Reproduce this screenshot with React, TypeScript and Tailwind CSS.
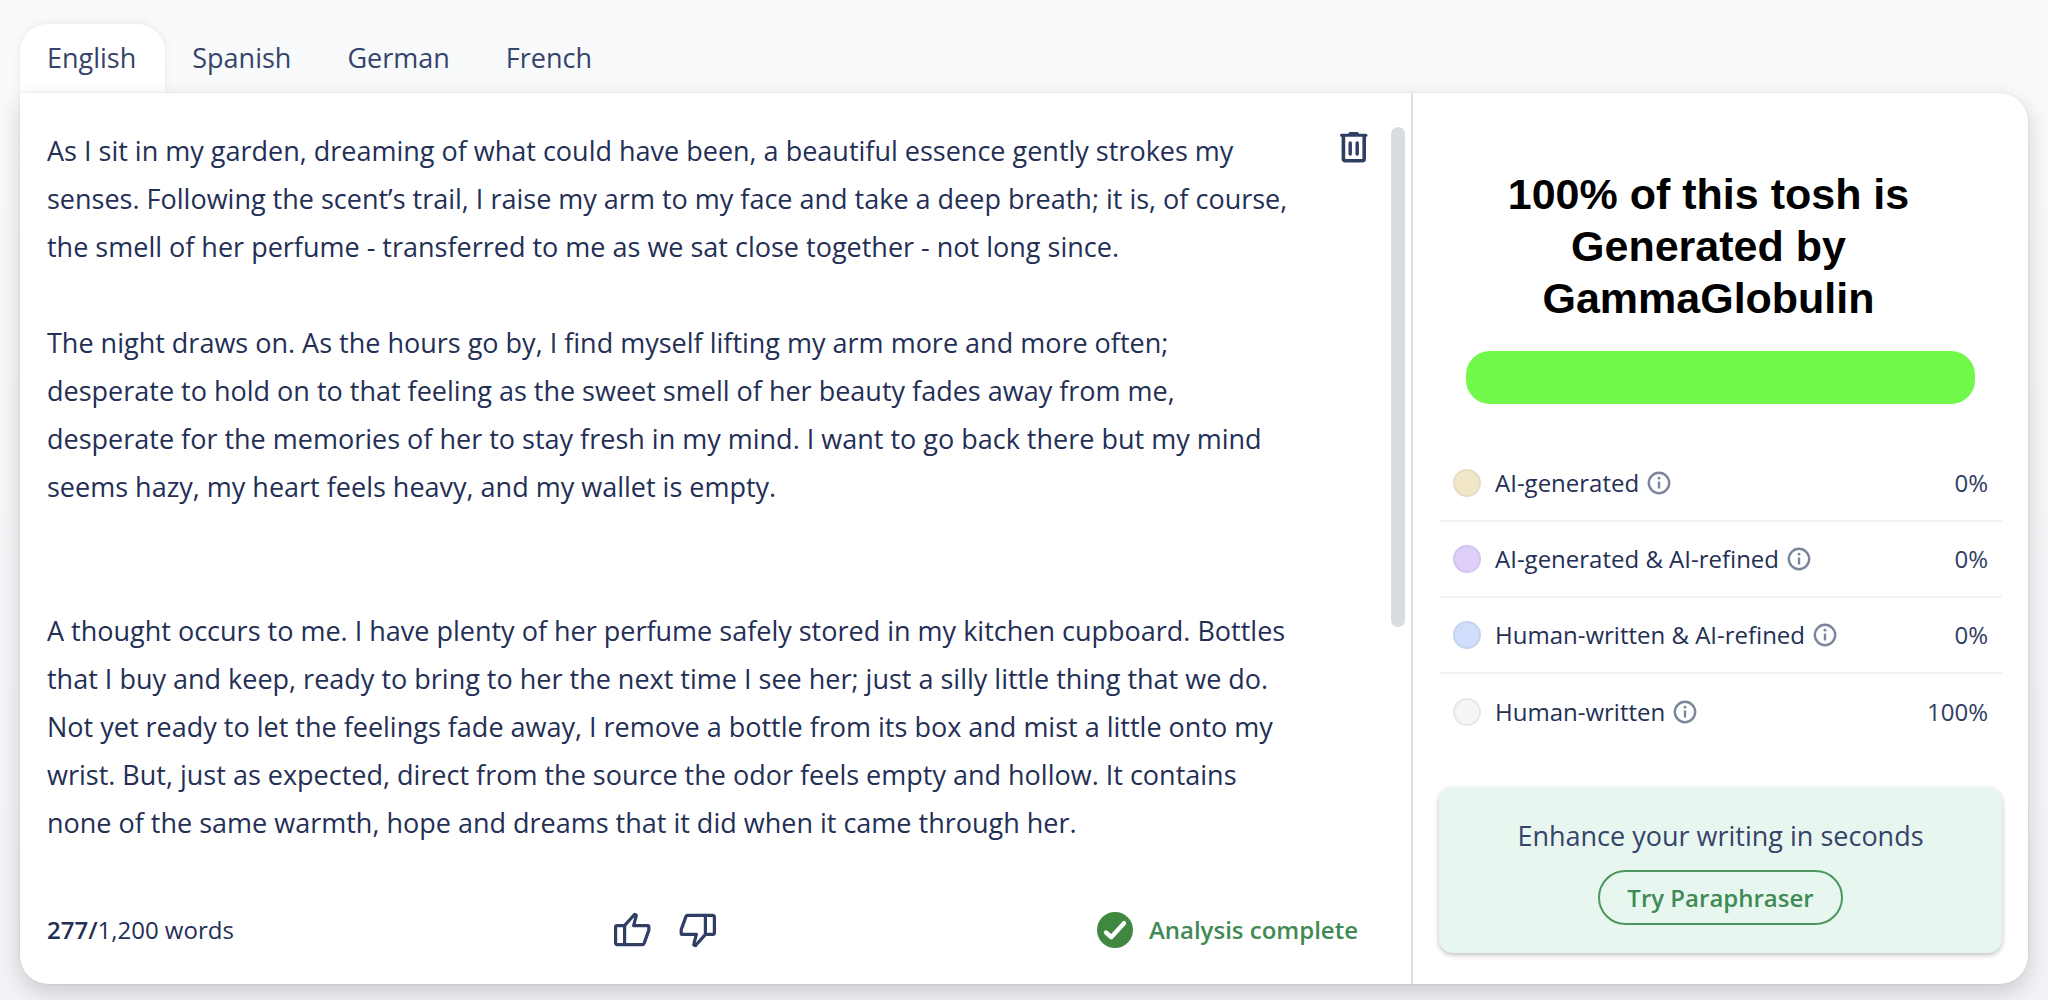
import { useState } from "react";

const languages = ["English", "Spanish", "German", "French"];

const essay = `As I sit in my garden, dreaming of what could have been, a beautiful essence gently strokes my senses. Following the scent’s trail, I raise my arm to my face and take a deep breath; it is, of course, the smell of her perfume - transferred to me as we sat close together - not long since.

The night draws on. As the hours go by, I find myself lifting my arm more and more often; desperate to hold on to that feeling as the sweet smell of her beauty fades away from me, desperate for the memories of her to stay fresh in my mind. I want to go back there but my mind seems hazy, my heart feels heavy, and my wallet is empty.


A thought occurs to me. I have plenty of her perfume safely stored in my kitchen cupboard. Bottles that I buy and keep, ready to bring to her the next time I see her; just a silly little thing that we do. Not yet ready to let the feelings fade away, I remove a bottle from its box and mist a little onto my wrist. But, just as expected, direct from the source the odor feels empty and hollow. It contains none of the same warmth, hope and dreams that it did when it came through her.`;

const results = [
  { label: "AI-generated", value: "0%", dot: "bg-[#f2e6c9] border-[#e6dcc3]" },
  { label: "AI-generated & AI-refined", value: "0%", dot: "bg-[#decffb] border-[#d3c5ef]" },
  { label: "Human-written & AI-refined", value: "0%", dot: "bg-[#cfdefb] border-[#c5d3ef]" },
  { label: "Human-written", value: "100%", dot: "bg-[#f4f5f6] border-[#e6e7e8]" },
];

function TrashIcon() {
  return (
    <svg width="30" height="32" viewBox="0 0 30 32" fill="none" stroke="currentColor" strokeWidth="3" strokeLinecap="round" strokeLinejoin="round" aria-hidden="true">
      <path d="M2.5 4.3h24.4" />
      <path d="M11 2.6h7.4" />
      <path d="M4.4 5v22.8a2 2 0 0 0 2 2h16.8a2 2 0 0 0 2-2V5" strokeWidth="3.6" />
      <path d="M11.2 12v11M18.2 12v11" strokeWidth="3.4" />
    </svg>
  );
}

function ThumbIcon({ down = false }: { down?: boolean }) {
  return (
    <svg width="38" height="36" viewBox="0 0 38 36" fill="none" stroke="currentColor" strokeWidth="3.2" strokeLinejoin="round" strokeLinecap="round" className={down ? "rotate-180" : ""} aria-hidden="true">
      <path d="M2.6 15.2A1.6 1.6 0 0 1 4.2 13.6H11.5L20.8 3.2a1.3 1.3 0 0 1 2.3 1.2L20.6 13.6H34.6a1.2 1.2 0 0 1 1.2 1.2v3.6L31 31.6a1.6 1.6 0 0 1-1.5 1H4.2a1.6 1.6 0 0 1-1.6-1.6Z" />
      <path d="M11.6 13.6v19" />
    </svg>
  );
}

function InfoIcon() {
  return (
    <svg width="24" height="24" viewBox="0 0 24 24" fill="none" aria-hidden="true">
      <circle cx="12" cy="12" r="10.2" stroke="currentColor" strokeWidth="2.4" />
      <path d="M12 10.5v7" stroke="currentColor" strokeWidth="2.4" />
      <circle cx="12" cy="7.2" r="1.4" fill="currentColor" />
    </svg>
  );
}

function CheckIcon() {
  return (
    <svg width="36" height="36" viewBox="0 0 36 36" fill="none" aria-hidden="true">
      <circle cx="18" cy="18" r="18" fill="#40883f" />
      <path d="m9 20.5 5.2 4.7L27 11.2" stroke="white" strokeWidth="4.4" strokeLinecap="round" strokeLinejoin="round" />
    </svg>
  );
}

export default function App() {
  const [active, setActive] = useState("English");
  const [text, setText] = useState(essay);

  return (
    <div className="min-h-screen bg-linear-to-b from-[#f8fafb] to-[#f1f3f6] px-5 pt-6 pb-4 font-['Open_Sans',sans-serif] text-[#232f55]">
      <nav className="flex" aria-label="Language">
        {languages.map((lang) => (
          <button
            key={lang}
            type="button"
            aria-pressed={active === lang}
            onClick={() => setActive(lang)}
            className={
              active === lang
                ? "h-[69px] rounded-t-[28px] bg-white pr-[29px] pl-[27px] text-[27px] text-[#36436a] shadow-[0_-1px_10px_rgba(0,0,0,0.07)]"
                : "h-[69px] pr-[29px] pl-[27px] text-[27px] text-[#36436a]"
            }
          >
            {lang}
          </button>
        ))}
      </nav>

      <main className="relative flex rounded-[28px] rounded-tl-none bg-white shadow-[0_8px_22px_rgba(0,0,0,0.17),0_0_2px_rgba(0,0,0,0.12)]">
        <section className="flex min-w-0 flex-1 flex-col pt-[34px] pl-[27px]">
          <div className="flex pr-1.5">
            <textarea
              aria-label="Text to analyse"
              value={text}
              onChange={(e) => setText(e.target.value)}
              rows={15}
              spellCheck={false}
              className="min-w-0 flex-1 resize-none overflow-hidden bg-transparent text-[27px] leading-[48px] outline-none"
            />
            <div className="flex w-[110px] items-start justify-between">
              <button type="button" aria-label="Delete text" onClick={() => setText("")} className="mt-1 ml-11 text-[#303e64]">
                <TrashIcon />
              </button>
              <div className="h-[500px] w-3.5 rounded-full bg-[#d9dde3]" />
            </div>
          </div>

          <footer className="mt-auto flex h-[136px] items-center justify-between pt-7 pr-[53px]">
            <p className="text-[24px]">
              <strong className="font-semibold">277/</strong>1,200 words
            </p>
            <div className="flex gap-7 text-[#303e64]">
              <button type="button" aria-label="Good result"><ThumbIcon /></button>
              <button type="button" aria-label="Bad result"><ThumbIcon down /></button>
            </div>
            <p className="flex items-center gap-4 text-[24px] font-semibold text-[#3f8a55]">
              <CheckIcon />
              Analysis complete
            </p>
          </footer>
        </section>

        <aside className="flex w-[617px] flex-col border-l-2 border-[#dcdfe5] px-[26px] pt-[75px] pb-[31px]">
          <h1 className="mx-auto max-w-[464px] pr-6 text-center font-['Liberation_Sans',sans-serif] text-[43px] leading-[52px] font-bold text-black">
            100% of this tosh is Generated by GammaGlobulin
          </h1>
          <div className="mx-[27px] mt-[27px] h-[53px] rounded-[24px] bg-[#72f84a]" />

          <ul className="mt-[42px]">
            {results.map((r) => (
              <li key={r.label} className="flex h-[76px] items-center border-b-2 border-[#f2f3f4] px-3.5 last:border-b-0">
                <span className={`mr-3.5 size-7 rounded-full border-2 ${r.dot}`} />
                <span className="text-[24px]">{r.label}</span>
                <button type="button" aria-label={`About ${r.label}`} className="ml-2 text-[#7b869c]">
                  <InfoIcon />
                </button>
                <span className="ml-auto text-[24px] font-medium text-[#303e64]">{r.value}</span>
              </li>
            ))}
          </ul>

          <div className="mt-[37px] flex flex-col items-center rounded-[14px] bg-[#e7f7ef] pt-7 pb-7 shadow-[0_2px_5px_rgba(0,0,0,0.25)]">
            <p className="text-[27px] leading-[42px] text-[#36436a]">Enhance your writing in seconds</p>
            <button type="button" className="mt-[13px] h-[55px] rounded-full border-2 border-[#4d9660] px-[27px] text-[24px] font-semibold text-[#3f8a55]">
              Try Paraphraser
            </button>
          </div>
        </aside>
      </main>
    </div>
  );
}
